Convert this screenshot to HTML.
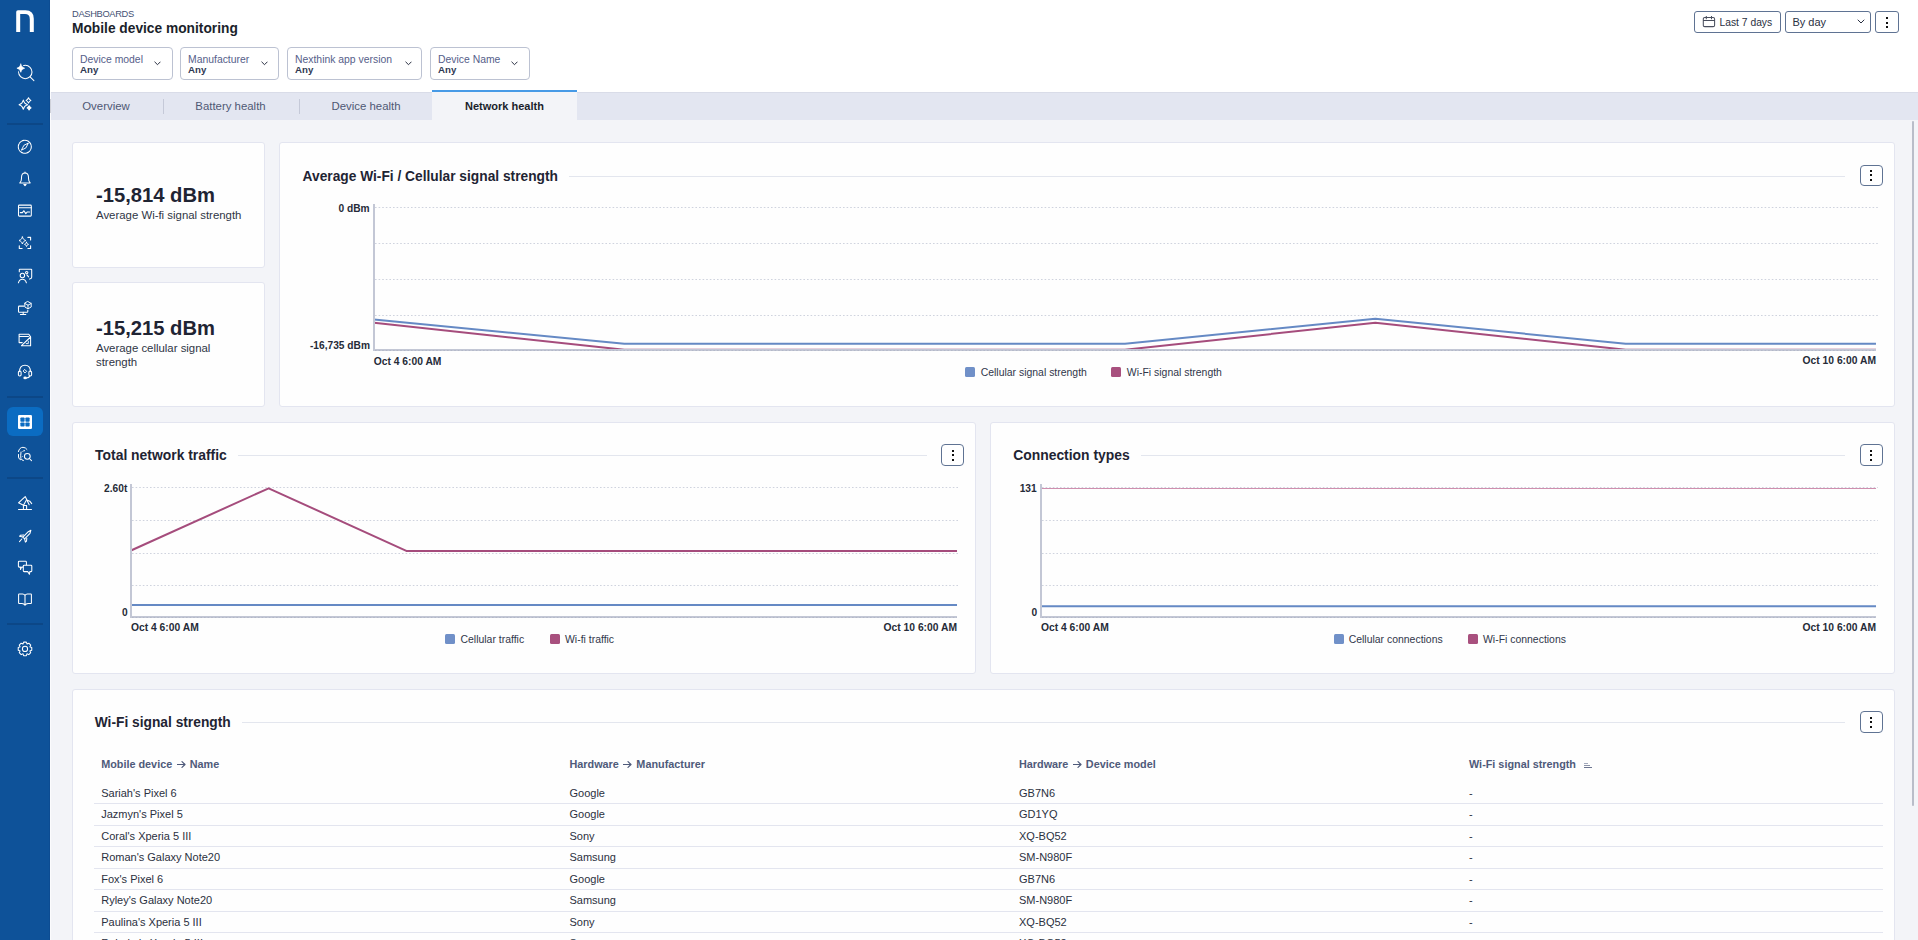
<!DOCTYPE html>
<html><head><meta charset="utf-8"><style>
*{box-sizing:border-box;margin:0;padding:0}
html,body{width:1918px;height:940px;overflow:hidden;background:#f3f4f8;font-family:"Liberation Sans",sans-serif;color:#1f2433}
.a{position:absolute;white-space:nowrap}
#side{position:absolute;left:0;top:0;width:50px;height:940px;background:#0e5299}
#side svg{position:absolute;left:0;top:0}
#hdr{position:absolute;left:0;top:0;width:1918px;height:92px;background:#fff}
#tabs{position:absolute;left:50px;top:92px;width:1868px;height:28px;background:#e3e6f1;border-top:1px solid #d9dce8}
.tab{position:absolute;top:0;height:27px;font-size:11.4px;line-height:27px;color:#4f5874;text-align:center}
.sep{position:absolute;top:6px;width:1px;height:15px;background:#c5c9d8}
.filt{position:absolute;top:47px;height:33px;border:1px solid #bcc2d2;border-radius:4px;background:#fff}
.btn{position:absolute;border:1px solid #5f7393;border-radius:3px;background:#fff}
.card{position:absolute;background:#fefefe;border:1px solid #e3e5f0;border-radius:3px}
.tline{position:absolute;height:1px;background:#e3e6ee}
.kb{position:absolute;width:23px;height:21px;border:1px solid #5f7393;border-radius:4px;background:#fff}
.kb i{position:absolute;left:10px;width:2px;height:2px;background:#111}
.sq{position:absolute;width:10px;height:10px;border-radius:1.5px}
</style></head><body>
<div id="hdr"></div>
<div id="side"><svg width="50" height="940" viewBox="0 0 50 940" fill="none" stroke="#fff" stroke-width="1.05" stroke-linecap="round" stroke-linejoin="round"><path d="M16.2,32 V12 Q16.2,10.3 18,10.3 H25.5 Q33.8,10.3 33.8,18.8 V32 H29.8 V19.2 Q29.8,14.1 25,14.1 H20.2 V32 Z" fill="#fff" stroke="none"/><circle cx="25.3" cy="72" r="6.7"/><path d="M30.1,76.8 L33.9,80.6"/><path d="M20.8,64.1 C21.97,66.97 21.97,66.97 24.7,68.2 C21.97,69.43 21.97,69.43 20.8,72.3 C19.63,69.43 19.63,69.43 16.9,68.2 C19.63,66.97 19.63,66.97 20.8,64.1 Z" fill="#fff" stroke="#0e5299" stroke-width="3"/><path d="M20.8,64.1 C21.97,66.97 21.97,66.97 24.7,68.2 C21.97,69.43 21.97,69.43 20.8,72.3 C19.63,69.43 19.63,69.43 16.9,68.2 C19.63,66.97 19.63,66.97 20.8,64.1 Z" fill="#fff" stroke="#fff" stroke-width="0.6"/><path d="M23.3,100.1 C24.56,103.32 24.56,103.32 27.5,104.7 C24.56,106.08 24.56,106.08 23.3,109.3 C22.04,106.08 22.04,106.08 19.1,104.7 C22.04,103.32 22.04,103.32 23.3,100.1 Z"/><path d="M28.5,97.7 C29.22,99.59 29.22,99.59 30.9,100.4 C29.22,101.21 29.22,101.21 28.5,103.1 C27.78,101.21 27.78,101.21 26.1,100.4 C27.78,99.59 27.78,99.59 28.5,97.7 Z"/><path d="M29.1,105.8 C29.8,107.17 29.8,107.17 31.1,107.9 C29.8,108.64 29.8,108.64 29.1,110 C28.4,108.64 28.4,108.64 27.1,107.9 C28.4,107.17 28.4,107.17 29.1,105.8 Z" fill="#fff"/><rect x="7" y="123.5" width="36" height="1" fill="#0a3d76" stroke="none"/><rect x="7" y="396.5" width="36" height="1" fill="#0a3d76" stroke="none"/><rect x="7" y="477.5" width="36" height="1" fill="#0a3d76" stroke="none"/><rect x="7" y="623.5" width="36" height="1" fill="#0a3d76" stroke="none"/><circle cx="24.8" cy="146.8" r="6.5" stroke-dasharray="2.2 0.75"/><path d="M28.2,143.4 L25.9,147.9 L21.4,150.2 L23.7,145.7 Z" stroke-width="0.95"/><path d="M19.8,182.9 Q21.5,181.3 21.5,178.6 V177.6 Q21.5,173 25,173 Q28.5,173 28.5,177.6 V178.6 Q28.5,181.3 30.2,182.9 Z"/><path d="M23.8,184.5 L25,185.7 L26.2,184.5 Z" fill="#fff"/><path d="M25,172 V173"/><rect x="18.5" y="205.1" width="12.8" height="11" rx="0.8"/><path d="M18.5,207.7 H31.3"/><path d="M20.3,212.6 L22.4,212.6 L23.9,210.7 L25.8,213.6 L27.3,211.9 L29.6,211.9"/><path d="M27.9,237.4 H30.6 V240 M19.3,245.8 V248.5 H22.1 M27.9,248.5 H30.6 V245.8" stroke-width="1.1"/><path d="M22.4,237 C23.42,239.45 23.42,239.45 25.8,240.5 C23.42,241.55 23.42,241.55 22.4,244 C21.38,241.55 21.38,241.55 19,240.5 C21.38,239.45 21.38,239.45 22.4,237 Z" stroke-width="0.95"/><path d="M26.5,242.3 C27.1,243.77 27.1,243.77 28.5,244.4 C27.1,245.03 27.1,245.03 26.5,246.5 C25.9,245.03 25.9,245.03 24.5,244.4 C25.9,243.77 25.9,243.77 26.5,242.3 Z" stroke-width="0.95"/><path d="M19.3,271.7 V269.8 Q19.3,269.2 19.9,269.2 H31.1 Q31.7,269.2 31.7,269.8 V277.2 Q31.7,278.6 29.6,279.1"/><circle cx="22.4" cy="275.5" r="2.2"/><path d="M18.4,282.8 Q19.4,279.2 22.4,279.2 Q25.4,279.2 26.4,282.8"/><circle cx="26.7" cy="272.6" r="1.2"/><path d="M26.9,274.8 L28.6,276.9"/><path d="M23.9,306.1 H19.3 Q18.5,306.1 18.5,306.9 V311.5 Q18.5,312.3 19.3,312.3 H27 Q27.8,312.3 27.8,311.5 V310.3"/><path d="M20.4,314.4 H25.8 M23.2,312.3 V314.4"/><path d="M28,301.6 L31.2,303.4 V307 L28,308.8 L24.8,307 V303.4 Z M24.8,303.4 L28,305.2 L31.2,303.4 M28,305.2 V308.8" stroke-width="0.95"/><path d="M22.2,342.6 H19.1 V334.2 H28.8 L30.6,336.9 M19.1,336.5 H28.5"/><path d="M30.6,337 V345.7 H21.5 Z"/><path d="M28.3,341.2 V343.6 H26.2" stroke-width="0.9"/><path d="M19.6,371.6 Q19.6,365.2 25,365.2 Q30.4,365.2 30.4,371.6"/><rect x="18.4" y="371" width="2.7" height="5" rx="1.3"/><rect x="28.9" y="371" width="2.7" height="5" rx="1.3"/><path d="M29.8,376 Q29.3,377.8 26.4,377.9"/><ellipse cx="25.1" cy="377.9" rx="1.2" ry="0.9" fill="#fff"/><path d="M25,369.7 L26.6,371.3 L25,372.9 L23.4,371.3 Z" stroke-width="1"/><rect x="7" y="407" width="36" height="29" rx="6" fill="#0b6cc2" stroke="none"/><rect x="18" y="415" width="14" height="14" rx="1.2" fill="#fff" stroke="none"/><rect x="20.4" y="417.5" width="4.2" height="4.2" rx="0.8" fill="#0b6cc2" stroke="none"/><rect x="25.4" y="417.5" width="4.2" height="4.2" rx="0.8" fill="#0b6cc2" stroke="none"/><rect x="20.4" y="422.4" width="4.2" height="4.2" rx="0.8" fill="#0b6cc2" stroke="none"/><rect x="25.4" y="422.4" width="4.2" height="4.2" rx="0.8" fill="#0b6cc2" stroke="none"/><path d="M18.4,451.6 Q19.5,447.3 23,447.3 Q25.6,447.3 27,449.4" stroke-width="1"/><path d="M18.5,454.5 V457 Q18.8,459.3 20.6,459.8 M21,452 Q20.4,455.5 20.9,458.6 Q21.6,460.2 23.4,460.6 M22.8,451.4 Q23.3,450.2 24.6,450.6" stroke-width="1"/><circle cx="22.4" cy="456.5" r="0.45" fill="#fff" stroke="none"/><circle cx="27.3" cy="456.3" r="2.9"/><path d="M29.4,458.5 L31.5,460.6"/><path d="M18.5,509.4 H31.5"/><path d="M23.4,509.4 V505.5 H26.6 V509.4"/><path d="M23.5,505.3 L18.5,502.8 L25.2,496.6 L26.7,499.6 Z"/><path d="M26.8,500 L29.8,501.2 L31.7,503.6 M27.3,501 L29.2,504.8"/><path d="M30.9,530.2 L30,533.4 L24.6,538.8 L22.9,537.1 L28.3,531.7 Z"/><path d="M22.9,537.1 L19.6,536.3 L20.5,535.2 L23.6,534.9 M24.6,538.8 L25.4,542.1 L26.5,541.2 L26.8,538.1"/><path d="M21.8,539 L19.5,541.6"/><path d="M19.2,561.2 H25.6 Q26.4,561.2 26.4,562 V566.3 Q26.4,567.1 25.6,567.1 H21.6 L20.5,569.5 V567.1 H19.2 Q18.4,567.1 18.4,566.3 V562 Q18.4,561.2 19.2,561.2 Z"/><path d="M24.1,565.3 H31 Q31.8,565.3 31.8,566.1 V570.8 Q31.8,571.6 31,571.6 H29.8 L29.4,574.3 L27.7,571.6 H24.1 Q23.3,571.6 23.3,570.8 V566.1 Q23.3,565.3 24.1,565.3 Z" fill="#0e5299"/><path d="M18.6,594.5 Q18.6,594 19.2,594 H22.6 Q24.3,594 25,595.4 Q25.7,594 27.4,594 H30.8 Q31.4,594 31.4,594.5 V602.9 Q31.4,603.4 30.8,603.4 H28 Q26,603.6 25,605.2 Q24,603.6 22,603.4 H19.2 Q18.6,603.4 18.6,602.9 Z M25,595.4 V604.4"/><path d="M22.97,644 L23.65,642.13 L26.35,642.13 L27.03,644 L28.83,643.16 L30.74,645.07 L29.9,646.87 L31.77,647.55 L31.77,650.25 L29.9,650.93 L30.74,652.73 L28.83,654.64 L27.03,653.8 L26.35,655.67 L23.65,655.67 L22.97,653.8 L21.17,654.64 L19.26,652.73 L20.1,650.93 L18.23,650.25 L18.23,647.55 L20.1,646.87 L19.26,645.07 L21.17,643.16 L22.97,644 Z"/><circle cx="25" cy="648.9" r="2.6"/></svg></div>
<div class="a" style="left:72px;top:9.73px;font-size:9.3px;line-height:9.3px;font-weight:400;color:#435073;letter-spacing:-0.33px">DASHBOARDS</div><div class="a" style="left:72px;top:22.16px;font-size:13.75px;line-height:13.75px;font-weight:700;color:#1b1f2b">Mobile device monitoring</div><div class="filt" style="left:72px;width:101px"></div><div class="a" style="left:80px;top:54.8px;font-size:10.4px;line-height:10.4px;font-weight:400;color:#56608a">Device model</div><div class="a" style="left:80px;top:64.99px;font-size:9.7px;line-height:9.7px;font-weight:700;color:#2f3952">Any</div><svg class="a" style="left:153.9px;top:60.5px" width="7" height="5" viewBox="0 0 7 5"><path d="M0.8,1 L3.5,3.7 L6.2,1" fill="none" stroke="#2a3042" stroke-width="1" stroke-linecap="round" stroke-linejoin="round"/></svg><div class="filt" style="left:180px;width:99px"></div><div class="a" style="left:188px;top:54.8px;font-size:10.4px;line-height:10.4px;font-weight:400;color:#56608a">Manufacturer</div><div class="a" style="left:188px;top:64.99px;font-size:9.7px;line-height:9.7px;font-weight:700;color:#2f3952">Any</div><svg class="a" style="left:260.7px;top:60.5px" width="7" height="5" viewBox="0 0 7 5"><path d="M0.8,1 L3.5,3.7 L6.2,1" fill="none" stroke="#2a3042" stroke-width="1" stroke-linecap="round" stroke-linejoin="round"/></svg><div class="filt" style="left:287px;width:135px"></div><div class="a" style="left:295px;top:54.8px;font-size:10.4px;line-height:10.4px;font-weight:400;color:#56608a">Nexthink app version</div><div class="a" style="left:295px;top:64.99px;font-size:9.7px;line-height:9.7px;font-weight:700;color:#2f3952">Any</div><svg class="a" style="left:405.1px;top:60.5px" width="7" height="5" viewBox="0 0 7 5"><path d="M0.8,1 L3.5,3.7 L6.2,1" fill="none" stroke="#2a3042" stroke-width="1" stroke-linecap="round" stroke-linejoin="round"/></svg><div class="filt" style="left:430px;width:100px"></div><div class="a" style="left:438px;top:54.8px;font-size:10.4px;line-height:10.4px;font-weight:400;color:#56608a">Device Name</div><div class="a" style="left:438px;top:64.99px;font-size:9.7px;line-height:9.7px;font-weight:700;color:#2f3952">Any</div><svg class="a" style="left:511.1px;top:60.5px" width="7" height="5" viewBox="0 0 7 5"><path d="M0.8,1 L3.5,3.7 L6.2,1" fill="none" stroke="#2a3042" stroke-width="1" stroke-linecap="round" stroke-linejoin="round"/></svg><div class="btn" style="left:1694px;top:11px;width:87px;height:22px"></div><svg class="a" style="left:1702px;top:15px" width="14" height="13" viewBox="0 0 14 13"><path d="M2.8,2.4 H11.1 Q12.6,2.4 12.6,3.9 V10.2 Q12.6,11.6 11.1,11.6 H2.8 Q1.3,11.6 1.3,10.2 V3.9 Q1.3,2.4 2.8,2.4 Z M1.3,5.5 H12.6 M4.3,1 V4.2 M9.5,1 V4.2" fill="none" stroke="#4a4f5e" stroke-width="1.05"/></svg><div class="a" style="left:1719.5px;top:18.28px;font-size:10.3px;line-height:10.3px;font-weight:400;color:#2a3042">Last 7 days</div><div class="btn" style="left:1785px;top:11px;width:86px;height:22px"></div><div class="a" style="left:1792.4px;top:17.29px;font-size:11px;line-height:11px;font-weight:400;color:#2a3042">By day</div><svg class="a" style="left:1857px;top:19px" width="8" height="5" viewBox="0 0 8 5"><path d="M1,1 L4,4 L7,1" fill="none" stroke="#2a3042" stroke-width="1" stroke-linecap="round" stroke-linejoin="round"/></svg><div class="btn" style="left:1875px;top:11px;width:24px;height:22px"><i style="position:absolute;left:10px;top:5px;width:2px;height:2px;background:#111"></i><i style="position:absolute;left:10px;top:9.5px;width:2px;height:2px;background:#111"></i><i style="position:absolute;left:10px;top:14px;width:2px;height:2px;background:#111"></i></div>
<div id="tabs"><div class="tab" style="left:0px;width:112px">Overview</div><div class="sep" style="left:113px"></div><div class="tab" style="left:112px;width:137px">Battery health</div><div class="sep" style="left:249px"></div><div class="tab" style="left:250px;width:132px">Device health</div><div class="tab" style="left:382px;top:-3px;height:31px;width:145px;background:#f3f4f8;border-top:2px solid #479ae6;font-weight:700;font-size:11px;color:#1b1f2b;line-height:29px">Network health</div></div>
<div class="card" style="left:72px;top:142px;width:193px;height:126px"></div>
<div class="card" style="left:72px;top:282px;width:193px;height:125px"></div>
<div class="card" style="left:279px;top:142px;width:1616px;height:265px"></div>
<div class="card" style="left:72px;top:422px;width:904px;height:252px"></div>
<div class="card" style="left:990px;top:422px;width:905px;height:252px"></div>
<div class="card" style="left:72px;top:689px;width:1823px;height:272px"></div>
<div class="a" style="left:96px;top:185.1px;font-size:20.2px;line-height:20.2px;font-weight:700;color:#1f2433">-15,814 dBm</div>
<div class="a" style="left:96px;top:209.95px;font-size:11.4px;line-height:11.4px;font-weight:400;color:#2f3545">Average Wi-fi signal strength</div>
<div class="a" style="left:96px;top:318.2px;font-size:20.2px;line-height:20.2px;font-weight:700;color:#1f2433">-15,215 dBm</div>
<div class="a" style="left:96px;top:342.95px;font-size:11.4px;line-height:11.4px;font-weight:400;color:#2f3545">Average cellular signal</div>
<div class="a" style="left:96px;top:356.95px;font-size:11.4px;line-height:11.4px;font-weight:400;color:#2f3545">strength</div>
<div class="a" style="left:302.6px;top:170.36px;font-size:13.75px;line-height:13.75px;font-weight:700;color:#1f2433">Average Wi-Fi / Cellular signal strength</div>
<div class="tline" style="left:569px;top:176px;width:1276px"></div>
<div class="kb" style="left:1860px;top:165px;height:21px"><i style="left:9px;top:3.8px"></i><i style="left:9px;top:8.1px"></i><i style="left:9px;top:12.5px"></i></div>
<div class="a" style="left:95.1px;top:449.03px;font-size:13.9px;line-height:13.9px;font-weight:700;color:#1f2433">Total network traffic</div>
<div class="tline" style="left:238px;top:455px;width:689px"></div>
<div class="kb" style="left:941px;top:444px;height:22px"><i style="left:10px;top:4.8px"></i><i style="left:10px;top:9.1px"></i><i style="left:10px;top:13.5px"></i></div>
<div class="a" style="left:1013.2px;top:449.03px;font-size:13.9px;line-height:13.9px;font-weight:700;color:#1f2433">Connection types</div>
<div class="tline" style="left:1141px;top:455px;width:704px"></div>
<div class="kb" style="left:1860px;top:444px;height:22px"><i style="left:9px;top:4.8px"></i><i style="left:9px;top:9.1px"></i><i style="left:9px;top:13.5px"></i></div>
<div class="a" style="left:94.7px;top:716.34px;font-size:13.78px;line-height:13.78px;font-weight:700;color:#1f2433">Wi-Fi signal strength</div>
<div class="tline" style="left:242px;top:722px;width:1603px"></div>
<div class="kb" style="left:1860px;top:711px;height:22px"><i style="left:9px;top:4.8px"></i><i style="left:9px;top:9.1px"></i><i style="left:9px;top:13.5px"></i></div>
<svg class="a" style="left:0;top:0" width="1918" height="940" viewBox="0 0 1918 940" fill="none"><path d="M375,207.5 H1878" stroke="#cfd3de" stroke-width="1" stroke-dasharray="1.6 2"/><path d="M375,243.5 H1878" stroke="#cfd3de" stroke-width="1" stroke-dasharray="1.6 2"/><path d="M375,279.5 H1878" stroke="#cfd3de" stroke-width="1" stroke-dasharray="1.6 2"/><path d="M375,315.5 H1878" stroke="#cfd3de" stroke-width="1" stroke-dasharray="1.6 2"/><path d="M374,319.5 L624.33,343.8 L874.66,343.8 L1124.99,343.8 L1375.32,318.8 L1625.65,343.8 L1875.98,343.8" stroke="#6589c4" stroke-width="2" stroke-linejoin="round"/><path d="M374,322.8 L624.33,349.7 L874.66,349.7 L1124.99,349.7 L1375.32,322.8 L1625.65,349.7 L1875.98,349.7" stroke="#a54c7c" stroke-width="2" stroke-linejoin="round"/><rect x="373" y="204" width="2" height="147" fill="#c3c7d5"/><rect x="373" y="349" width="1503" height="2" fill="#c3c7d5"/><path d="M375,350.5 H1876" stroke="#b3b8c8" stroke-width="1" stroke-dasharray="1.6 2"/><path d="M132,487.5 H958" stroke="#cfd3de" stroke-width="1" stroke-dasharray="1.6 2"/><path d="M132,520.5 H958" stroke="#cfd3de" stroke-width="1" stroke-dasharray="1.6 2"/><path d="M132,553.5 H958" stroke="#cfd3de" stroke-width="1" stroke-dasharray="1.6 2"/><path d="M132,585.5 H958" stroke="#cfd3de" stroke-width="1" stroke-dasharray="1.6 2"/><path d="M131,550.5 L268.67,488.3 L406.34,550.9 L544.01,550.9 L681.68,550.9 L819.35,550.9 L957.02,550.9" stroke="#a54c7c" stroke-width="2" stroke-linejoin="round"/><path d="M131,604.9 L268.67,604.9 L406.34,604.9 L544.01,604.9 L681.68,604.9 L819.35,604.9 L957.02,604.9" stroke="#6589c4" stroke-width="2" stroke-linejoin="round"/><rect x="130" y="484" width="2" height="134" fill="#c3c7d5"/><rect x="130" y="616" width="827" height="2" fill="#c3c7d5"/><path d="M132,617.5 H957" stroke="#b3b8c8" stroke-width="1" stroke-dasharray="1.6 2"/><path d="M1042,487.5 H1878" stroke="#cfd3de" stroke-width="1" stroke-dasharray="1.6 2"/><path d="M1042,520.5 H1878" stroke="#cfd3de" stroke-width="1" stroke-dasharray="1.6 2"/><path d="M1042,553.5 H1878" stroke="#cfd3de" stroke-width="1" stroke-dasharray="1.6 2"/><path d="M1042,585.5 H1878" stroke="#cfd3de" stroke-width="1" stroke-dasharray="1.6 2"/><path d="M1041,488.5 L1180.17,488.5 L1319.34,488.5 L1458.51,488.5 L1597.68,488.5 L1736.85,488.5 L1876.02,488.5" stroke="#cf8fae" stroke-width="1" stroke-linejoin="round"/><path d="M1041,606.3 L1180.17,606.3 L1319.34,606.3 L1458.51,606.3 L1597.68,606.3 L1736.85,606.3 L1876.02,606.3" stroke="#6589c4" stroke-width="2" stroke-linejoin="round"/><rect x="1040" y="484" width="2" height="134" fill="#c3c7d5"/><rect x="1040" y="616" width="836" height="2" fill="#c3c7d5"/><path d="M1042,617.5 H1876" stroke="#b3b8c8" stroke-width="1" stroke-dasharray="1.6 2"/></svg>
<div class="a" style="right:1548.4px;top:203.77px;font-size:10.2px;line-height:10.2px;font-weight:700;color:#262b38">0 dBm</div>
<div class="a" style="right:1548px;top:340.97px;font-size:10.2px;line-height:10.2px;font-weight:700;color:#262b38">-16,735 dBm</div>
<div class="a" style="left:373.7px;top:356.88px;font-size:10.3px;line-height:10.3px;font-weight:700;color:#262b38">Oct 4 6:00 AM</div>
<div class="a" style="right:42px;top:356.48px;font-size:10.3px;line-height:10.3px;font-weight:700;color:#262b38">Oct 10 6:00 AM</div>
<div class="a" style="right:1790.7px;top:483.77px;font-size:10.2px;line-height:10.2px;font-weight:700;color:#262b38">2.60t</div>
<div class="a" style="right:1790.4px;top:607.77px;font-size:10.2px;line-height:10.2px;font-weight:700;color:#262b38">0</div>
<div class="a" style="left:131px;top:622.78px;font-size:10.3px;line-height:10.3px;font-weight:700;color:#262b38">Oct 4 6:00 AM</div>
<div class="a" style="right:961px;top:622.78px;font-size:10.3px;line-height:10.3px;font-weight:700;color:#262b38">Oct 10 6:00 AM</div>
<div class="a" style="right:881.3px;top:483.77px;font-size:10.2px;line-height:10.2px;font-weight:700;color:#262b38">131</div>
<div class="a" style="right:880.8px;top:607.77px;font-size:10.2px;line-height:10.2px;font-weight:700;color:#262b38">0</div>
<div class="a" style="left:1041px;top:622.78px;font-size:10.3px;line-height:10.3px;font-weight:700;color:#262b38">Oct 4 6:00 AM</div>
<div class="a" style="right:42px;top:622.78px;font-size:10.3px;line-height:10.3px;font-weight:700;color:#262b38">Oct 10 6:00 AM</div>
<div class="sq" style="left:965px;top:367px;background:#7090c8"></div>
<div class="a" style="left:980.7px;top:368.25px;font-size:10.45px;line-height:10.45px;font-weight:400;color:#30364a">Cellular signal strength</div>
<div class="sq" style="left:1111px;top:367px;background:#a8507e"></div>
<div class="a" style="left:1126.8px;top:368.25px;font-size:10.45px;line-height:10.45px;font-weight:400;color:#30364a">Wi-Fi signal strength</div>
<div class="sq" style="left:445px;top:634px;background:#7090c8"></div>
<div class="a" style="left:460.5px;top:635.25px;font-size:10.45px;line-height:10.45px;font-weight:400;color:#30364a">Cellular traffic</div>
<div class="sq" style="left:550px;top:634px;background:#a8507e"></div>
<div class="a" style="left:565px;top:635.25px;font-size:10.45px;line-height:10.45px;font-weight:400;color:#30364a">Wi-fi traffic</div>
<div class="sq" style="left:1334px;top:634px;background:#7090c8"></div>
<div class="a" style="left:1348.7px;top:635.25px;font-size:10.45px;line-height:10.45px;font-weight:400;color:#30364a">Cellular connections</div>
<div class="sq" style="left:1468px;top:634px;background:#a8507e"></div>
<div class="a" style="left:1483px;top:635.25px;font-size:10.45px;line-height:10.45px;font-weight:400;color:#30364a">Wi-Fi connections</div>
<div class="a" style="left:101.2px;top:759.23px;font-size:10.83px;line-height:10.83px;font-weight:700;color:#4f5a7a">Mobile device<svg style="display:inline-block;vertical-align:0px;margin:0 4px 0 4.5px" width="9" height="7" viewBox="0 0 9 7"><path d="M0.5,3.5 H8 M5,0.6 L8,3.5 L5,6.4" fill="none" stroke="#4f5a7a" stroke-width="1.2" stroke-linejoin="round" stroke-linecap="round"/></svg>Name</div>
<div class="a" style="left:569.5px;top:759.23px;font-size:10.83px;line-height:10.83px;font-weight:700;color:#4f5a7a">Hardware<svg style="display:inline-block;vertical-align:0px;margin:0 4px 0 4.5px" width="9" height="7" viewBox="0 0 9 7"><path d="M0.5,3.5 H8 M5,0.6 L8,3.5 L5,6.4" fill="none" stroke="#4f5a7a" stroke-width="1.2" stroke-linejoin="round" stroke-linecap="round"/></svg>Manufacturer</div>
<div class="a" style="left:1019px;top:759.23px;font-size:10.83px;line-height:10.83px;font-weight:700;color:#4f5a7a">Hardware<svg style="display:inline-block;vertical-align:0px;margin:0 4px 0 4.5px" width="9" height="7" viewBox="0 0 9 7"><path d="M0.5,3.5 H8 M5,0.6 L8,3.5 L5,6.4" fill="none" stroke="#4f5a7a" stroke-width="1.2" stroke-linejoin="round" stroke-linecap="round"/></svg>Device model</div>
<div class="a" style="left:1469px;top:759.23px;font-size:10.83px;line-height:10.83px;font-weight:700;color:#4f5a7a">Wi-Fi signal strength</div>
<div class="a" style="left:1584px;top:763px;width:4px;height:1px;background:#a3a9bb"></div><div class="a" style="left:1584px;top:765px;width:6px;height:1px;background:#8c93a8"></div><div class="a" style="left:1584px;top:767px;width:8px;height:1px;background:#6c7590"></div>
<div class="a" style="left:101.2px;top:787.89px;font-size:11px;line-height:11px;font-weight:400;color:#2b3040">Sariah's Pixel 6</div>
<div class="a" style="left:569.5px;top:787.89px;font-size:11px;line-height:11px;font-weight:400;color:#2b3040">Google</div>
<div class="a" style="left:1019px;top:787.89px;font-size:11px;line-height:11px;font-weight:400;color:#2b3040">GB7N6</div>
<div class="a" style="left:1469px;top:787.89px;font-size:11px;line-height:11px;font-weight:400;color:#2b3040">-</div>
<div class="a" style="left:94px;top:803px;width:1789px;height:1px;background:#e3e5ef"></div>
<div class="a" style="left:101.2px;top:809.36px;font-size:11px;line-height:11px;font-weight:400;color:#2b3040">Jazmyn's Pixel 5</div>
<div class="a" style="left:569.5px;top:809.36px;font-size:11px;line-height:11px;font-weight:400;color:#2b3040">Google</div>
<div class="a" style="left:1019px;top:809.36px;font-size:11px;line-height:11px;font-weight:400;color:#2b3040">GD1YQ</div>
<div class="a" style="left:1469px;top:809.36px;font-size:11px;line-height:11px;font-weight:400;color:#2b3040">-</div>
<div class="a" style="left:94px;top:825px;width:1789px;height:1px;background:#e3e5ef"></div>
<div class="a" style="left:101.2px;top:830.83px;font-size:11px;line-height:11px;font-weight:400;color:#2b3040">Coral's Xperia 5 III</div>
<div class="a" style="left:569.5px;top:830.83px;font-size:11px;line-height:11px;font-weight:400;color:#2b3040">Sony</div>
<div class="a" style="left:1019px;top:830.83px;font-size:11px;line-height:11px;font-weight:400;color:#2b3040">XQ-BQ52</div>
<div class="a" style="left:1469px;top:830.83px;font-size:11px;line-height:11px;font-weight:400;color:#2b3040">-</div>
<div class="a" style="left:94px;top:846px;width:1789px;height:1px;background:#e3e5ef"></div>
<div class="a" style="left:101.2px;top:852.3px;font-size:11px;line-height:11px;font-weight:400;color:#2b3040">Roman's Galaxy Note20</div>
<div class="a" style="left:569.5px;top:852.3px;font-size:11px;line-height:11px;font-weight:400;color:#2b3040">Samsung</div>
<div class="a" style="left:1019px;top:852.3px;font-size:11px;line-height:11px;font-weight:400;color:#2b3040">SM-N980F</div>
<div class="a" style="left:1469px;top:852.3px;font-size:11px;line-height:11px;font-weight:400;color:#2b3040">-</div>
<div class="a" style="left:94px;top:868px;width:1789px;height:1px;background:#e3e5ef"></div>
<div class="a" style="left:101.2px;top:873.77px;font-size:11px;line-height:11px;font-weight:400;color:#2b3040">Fox's Pixel 6</div>
<div class="a" style="left:569.5px;top:873.77px;font-size:11px;line-height:11px;font-weight:400;color:#2b3040">Google</div>
<div class="a" style="left:1019px;top:873.77px;font-size:11px;line-height:11px;font-weight:400;color:#2b3040">GB7N6</div>
<div class="a" style="left:1469px;top:873.77px;font-size:11px;line-height:11px;font-weight:400;color:#2b3040">-</div>
<div class="a" style="left:94px;top:889px;width:1789px;height:1px;background:#e3e5ef"></div>
<div class="a" style="left:101.2px;top:895.24px;font-size:11px;line-height:11px;font-weight:400;color:#2b3040">Ryley's Galaxy Note20</div>
<div class="a" style="left:569.5px;top:895.24px;font-size:11px;line-height:11px;font-weight:400;color:#2b3040">Samsung</div>
<div class="a" style="left:1019px;top:895.24px;font-size:11px;line-height:11px;font-weight:400;color:#2b3040">SM-N980F</div>
<div class="a" style="left:1469px;top:895.24px;font-size:11px;line-height:11px;font-weight:400;color:#2b3040">-</div>
<div class="a" style="left:94px;top:911px;width:1789px;height:1px;background:#e3e5ef"></div>
<div class="a" style="left:101.2px;top:916.71px;font-size:11px;line-height:11px;font-weight:400;color:#2b3040">Paulina's Xperia 5 III</div>
<div class="a" style="left:569.5px;top:916.71px;font-size:11px;line-height:11px;font-weight:400;color:#2b3040">Sony</div>
<div class="a" style="left:1019px;top:916.71px;font-size:11px;line-height:11px;font-weight:400;color:#2b3040">XQ-BQ52</div>
<div class="a" style="left:1469px;top:916.71px;font-size:11px;line-height:11px;font-weight:400;color:#2b3040">-</div>
<div class="a" style="left:94px;top:932px;width:1789px;height:1px;background:#e3e5ef"></div>
<div class="a" style="left:101.2px;top:938.18px;font-size:11px;line-height:11px;font-weight:400;color:#2b3040">Raheim's Xperia 5 III</div>
<div class="a" style="left:569.5px;top:938.18px;font-size:11px;line-height:11px;font-weight:400;color:#2b3040">Sony</div>
<div class="a" style="left:1019px;top:938.18px;font-size:11px;line-height:11px;font-weight:400;color:#2b3040">XQ-BQ52</div>
<div class="a" style="left:1469px;top:938.18px;font-size:11px;line-height:11px;font-weight:400;color:#2b3040">-</div>
<div class="a" style="left:94px;top:954px;width:1789px;height:1px;background:#e3e5ef"></div>
<div class="a" style="left:1912px;top:121px;width:2px;height:685px;background:#b9bdc9;border-radius:1px"></div>
<div class="a" style="left:50px;top:92px;width:1px;height:848px;background:#fbfbfd"></div><div class="a" style="left:50px;top:99px;width:1px;height:14px;background:#d0d2da"></div><div class="a" style="left:49px;top:0;width:1px;height:940px;background:#0c4c92"></div>
</body></html>
